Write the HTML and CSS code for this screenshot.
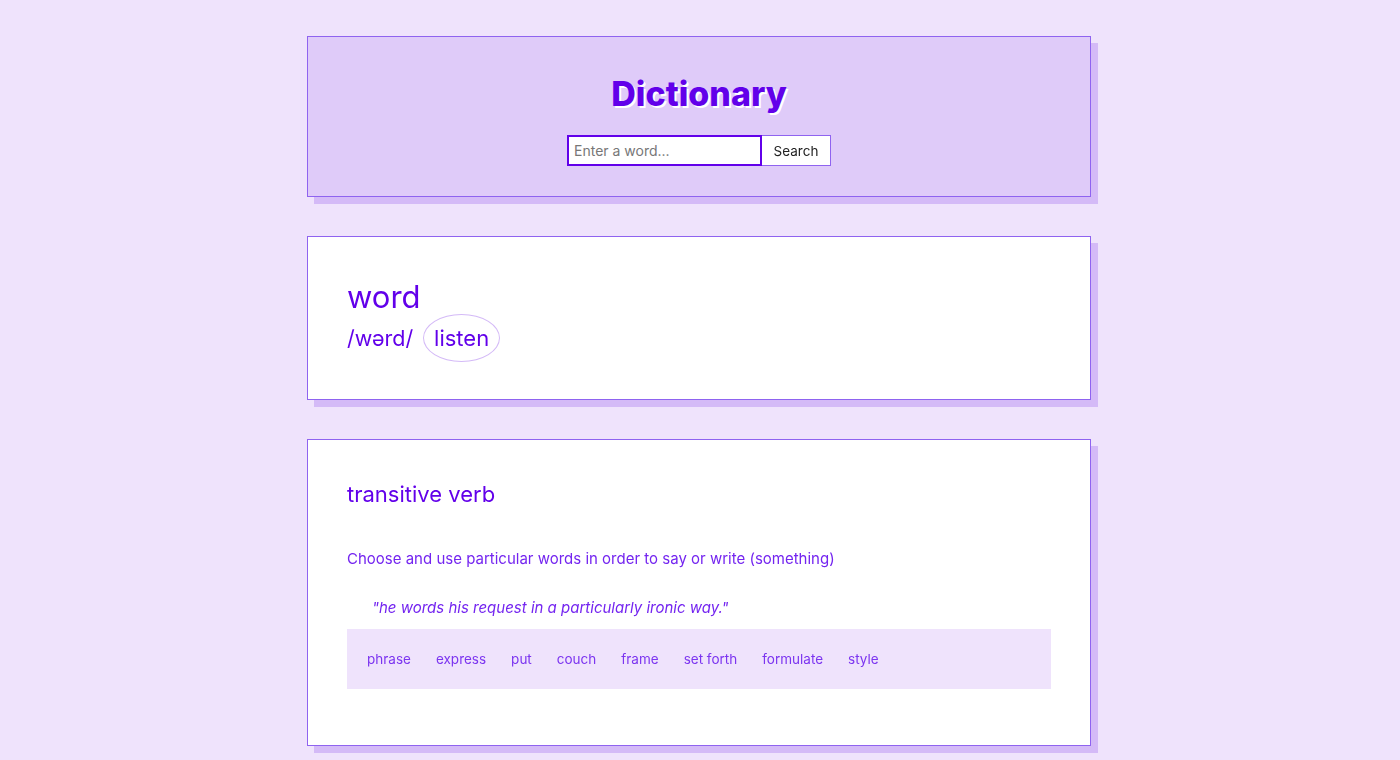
FILE: index.html
```html
<!DOCTYPE html>
<html lang="en">
<head>
<meta charset="utf-8">
<title>Dictionary</title>
<link rel="stylesheet" href="styles.css">
</head>
<body>
<main class="app">
  <header class="card card-header">
    <h1 class="title">Dictionary</h1>
    <form class="search">
      <input class="search-input" type="search" placeholder="Enter a word..." autofocus>
      <button class="search-btn" type="button">Search</button>
    </form>
  </header>

  <section class="card card-word">
    <h2 class="word">word</h2>
    <div class="phonetic-row">
      <span class="phonetic">/wərd/</span>
      <button class="listen" type="button">listen</button>
    </div>
  </section>

  <section class="card card-meaning">
    <h3 class="pos">transitive verb</h3>
    <p class="definition">Choose and use particular words in order to say or write (something)</p>
    <p class="example">"he words his request in a particularly ironic way."</p>
    <ul class="synonyms">
      <li>phrase</li>
      <li>express</li>
      <li>put</li>
      <li>couch</li>
      <li>frame</li>
      <li>set forth</li>
      <li>formulate</li>
      <li>style</li>
    </ul>
  </section>
</main>
</body>
</html>
```

FILE: styles.css
```css
* { box-sizing: border-box; }

html, body {
  margin: 0;
  padding: 0;
  background: #efe3fc;
  font-family: Inter, "Noto Sans", "Liberation Sans", sans-serif;
  color: #6200ea;
}

.app {
  width: 784px;
  margin: 0 auto;
  padding-top: 36px;
  transform: translateX(-1px);
}

.card {
  background: #ffffff;
  border: 1px solid #8f63f0;
  box-shadow: 7px 7px 0 #d4baf7;
  margin-bottom: 39px;
  padding: 39px;
}

.card-header {
  background: #dfcbf9;
  text-align: center;
  padding-top: 37px;
  padding-bottom: 29px;
  height: 161px;
}

.title {
  margin: 0 0 21px;
  font-size: 34px;
  line-height: 40px;
  font-weight: 800;
  color: #6200ea;
  text-shadow: 2px 2px 0 #ffffff;
  letter-spacing: 0;
}

.search {
  display: flex;
  justify-content: center;
  margin: 0;
}

.search-input {
  width: 195px;
  height: 31px;
  border: 2px solid #6200ea;
  background: #fff;
  padding: 0 5px;
  font-family: inherit;
  font-size: 14px;
  color: #333;
  outline: none;
}

.search-input::placeholder { color: #777; }

.search-btn {
  height: 31px;
  width: 69px;
  border: 1px solid #8f63f0;
  border-left: none;
  background: #fff;
  font-family: inherit;
  font-size: 13.5px;
  color: #222;
  padding: 0;
}

.card-word {
  height: 164px;
  padding-top: 41px;
}

.word {
  margin: 0;
  font-size: 31px;
  line-height: 38px;
  font-weight: 400;
  color: #6200ea;
}

.phonetic-row {
  display: flex;
  align-items: center;
  gap: 10px;
  margin-top: -2px;
}

.phonetic {
  font-size: 21.5px;
  line-height: 30px;
}

.listen {
  font-family: inherit;
  font-size: 22px;
  color: #6200ea;
  background: #fff;
  border: 1px solid #d4baf7;
  border-radius: 50%;
  width: 77px;
  height: 48px;
  padding: 0;
  line-height: 46px;
}

.card-meaning {
  padding-top: 40px;
  padding-bottom: 56px;
}

.pos {
  margin: 0 0 41px;
  font-size: 22px;
  line-height: 28px;
  font-weight: 400;
  color: #6200ea;
}

.definition {
  margin: 0 0 29px;
  font-size: 15px;
  line-height: 20px;
  color: #7425f0;
}

.example {
  margin: 0 0 11px;
  padding-left: 25px;
  font-size: 15px;
  line-height: 20px;
  font-style: italic;
  color: #7425f0;
}

.synonyms {
  list-style: none;
  margin: 0;
  padding: 0 20px;
  height: 60px;
  background: #efe3fc;
  display: flex;
  align-items: center;
  gap: 25px;
  font-size: 13.5px;
  color: #7c35f0;
}
```
